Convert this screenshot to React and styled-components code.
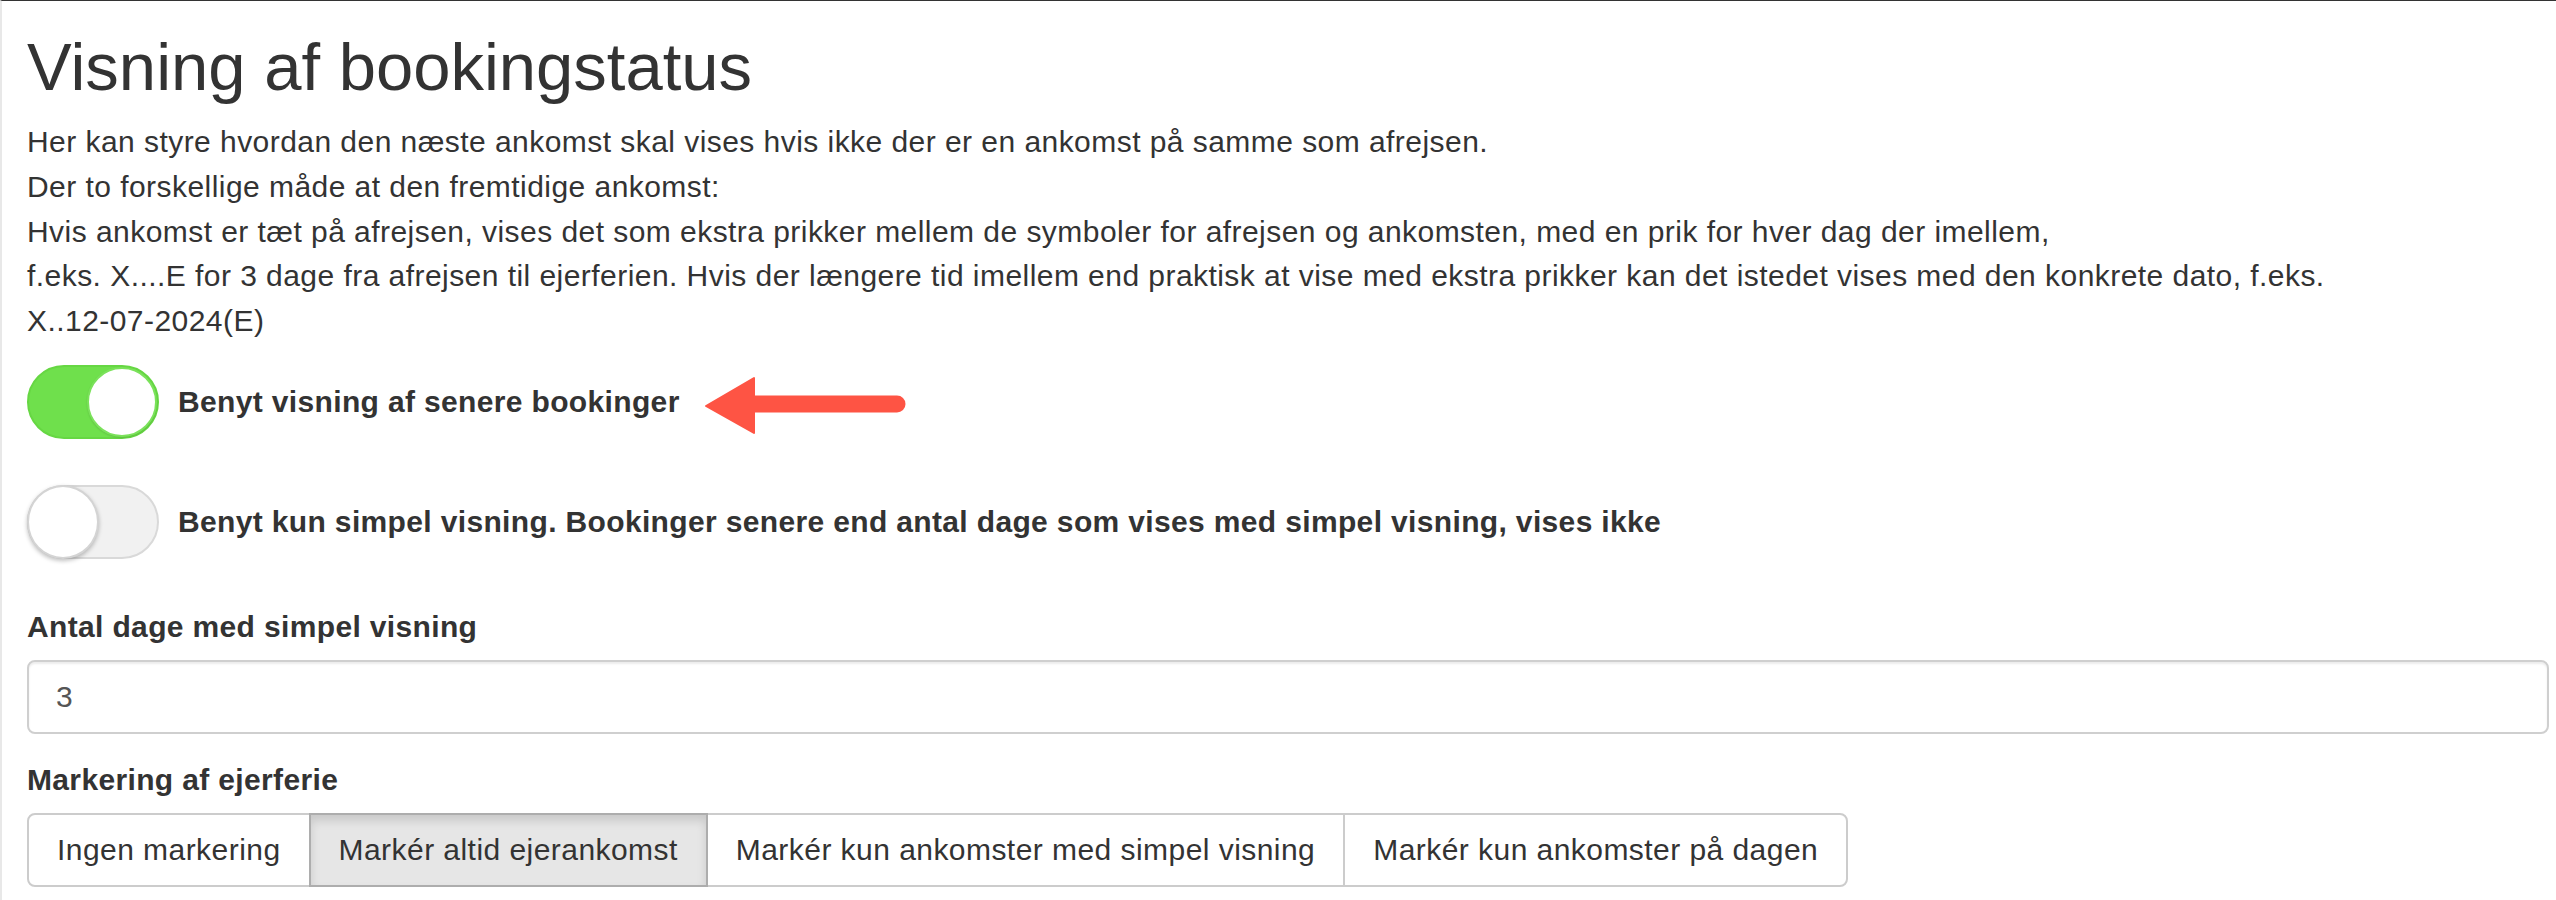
import React, { useState } from "react";
import styled, { createGlobalStyle, css } from "styled-components";

const GlobalStyle = createGlobalStyle`
  html, body {
    margin: 0;
    padding: 0;
    background: #fff;
  }
  body {
    font-family: "Liberation Sans", Arial, Helvetica, sans-serif;
    color: #333;
  }
  * { box-sizing: border-box; }
`;

const Page = styled.div`
  min-height: 900px;
  border-top: 1px solid #333;
  border-left: 2px solid #e8e8e8;
  padding: 28px 7px 0 25px;
`;

const Title = styled.h1`
  margin: 0 0 16px;
  font-size: 67px;
  font-weight: 400;
  line-height: 75px;
  color: #333;
`;

const Intro = styled.p`
  margin: 0 0 21px;
  font-size: 30px;
  letter-spacing: 0.45px;
  line-height: 44.8px;
`;

const SwitchRow = styled.div`
  position: relative;
  display: flex;
  align-items: center;
  gap: 19px;
  height: 74px;
  margin-bottom: 46px;
`;

const Track = styled.button`
  position: relative;
  flex: none;
  width: 132px;
  height: 74px;
  padding: 0;
  border-radius: 37px;
  cursor: pointer;
  ${(p) =>
    p.$on
      ? css`
          background: #6fe04c;
          border: 2px solid #66d743;
        `
      : css`
          background: #f1f1f1;
          border: 2px solid #d9d9d9;
        `}
`;

const Knob = styled.span`
  position: absolute;
  top: ${(p) => (p.$on ? "0px" : "-2px")};
  left: ${(p) => (p.$on ? "58px" : "-2px")};
  width: ${(p) => (p.$on ? "70px" : "72px")};
  height: ${(p) => (p.$on ? "70px" : "74px")};
  border-radius: 50%;
  background: #fff;
  ${(p) =>
    p.$on
      ? css`
          border: 2px solid #7be25b;
          box-shadow: 0 1px 2px rgba(0, 0, 0, 0.12);
        `
      : css`
          border: 2px solid #d4d4d4;
          box-shadow: 0 2px 4px rgba(0, 0, 0, 0.25);
        `}
`;

const SwitchLabel = styled.span`
  font-size: 30px;
  font-weight: 700;
  letter-spacing: 0.35px;
  line-height: 44.8px;
  color: #333;
`;

const Arrow = styled.svg`
  position: absolute;
  left: 673px;
  top: 10px;
  width: 210px;
  height: 60px;
  overflow: visible;
`;

const FieldLabel = styled.label`
  display: block;
  margin-bottom: 10px;
  font-size: 30px;
  font-weight: 700;
  letter-spacing: 0.35px;
  line-height: 44.8px;
`;

const TextInput = styled.input`
  display: block;
  width: 100%;
  height: 74px;
  margin: 0 0 24px;
  padding: 0 27px;
  border: 2px solid #cfcfcf;
  border-radius: 8px;
  box-shadow: inset 0 2px 2px rgba(0, 0, 0, 0.075);
  font-family: "Liberation Sans", Arial, sans-serif;
  font-size: 30px;
  color: #555;
  background: #fff;
  outline: none;
`;

const BtnGroup = styled.div`
  display: inline-flex;
`;

const GroupButton = styled.button`
  height: 74px;
  padding: 0 28px;
  margin-left: -2px;
  font-family: "Liberation Sans", Arial, sans-serif;
  font-size: 30px;
  letter-spacing: 0.45px;
  color: #333;
  border: 2px solid #cccccc;
  background: #fff;
  cursor: pointer;
  white-space: nowrap;
  &:first-child {
    margin-left: 0;
    border-radius: 8px 0 0 8px;
  }
  &:last-child {
    border-radius: 0 8px 8px 0;
  }
  ${(p) =>
    p.$active &&
    css`
      position: relative;
      z-index: 1;
      background: #e6e6e6;
      border-color: #adadad;
      box-shadow: inset 0 6px 10px rgba(0, 0, 0, 0.125);
    `}
`;

const options = [
  "Ingen markering",
  "Markér altid ejerankomst",
  "Markér kun ankomster med simpel visning",
  "Markér kun ankomster på dagen",
];

export default function App() {
  const [later, setLater] = useState(true);
  const [simple, setSimple] = useState(false);
  const [mark, setMark] = useState(1);
  const [days, setDays] = useState("3");

  return (
    <>
      <GlobalStyle />
      <Page>
        <Title>Visning af bookingstatus</Title>
        <Intro>
          Her kan styre hvordan den næste ankomst skal vises hvis ikke der er en ankomst på samme som afrejsen.
          <br />
          Der to forskellige måde at den fremtidige ankomst:
          <br />
          Hvis ankomst er tæt på afrejsen, vises det som ekstra prikker mellem de symboler for afrejsen og ankomsten, med en prik for hver dag der imellem,
          <br />
          f.eks. X....E for 3 dage fra afrejsen til ejerferien. Hvis der længere tid imellem end praktisk at vise med ekstra prikker kan det istedet vises med den konkrete dato, f.eks.
          <br />
          X..12-07-2024(E)
        </Intro>

        <SwitchRow>
          <Track $on={later} onClick={() => setLater(!later)} aria-pressed={later}>
            <Knob $on={later} />
          </Track>
          <SwitchLabel>Benyt visning af senere bookinger</SwitchLabel>
          <Arrow viewBox="0 0 210 60">
            <line x1="50" y1="29" x2="197" y2="29" stroke="#fe5444" strokeWidth="17" strokeLinecap="round" />
            <path d="M6 31 L54 3 L54 58 Z" fill="#fe5444" stroke="#fe5444" strokeWidth="2" strokeLinejoin="round" />
          </Arrow>
        </SwitchRow>

        <SwitchRow>
          <Track $on={simple} onClick={() => setSimple(!simple)} aria-pressed={simple}>
            <Knob $on={simple} />
          </Track>
          <SwitchLabel>
            Benyt kun simpel visning. Bookinger senere end antal dage som vises med simpel visning, vises ikke
          </SwitchLabel>
        </SwitchRow>

        <FieldLabel htmlFor="days">Antal dage med simpel visning</FieldLabel>
        <TextInput id="days" value={days} onChange={(e) => setDays(e.target.value)} />

        <FieldLabel>Markering af ejerferie</FieldLabel>
        <BtnGroup>
          {options.map((o, i) => (
            <GroupButton key={o} $active={mark === i} onClick={() => setMark(i)}>
              {o}
            </GroupButton>
          ))}
        </BtnGroup>
      </Page>
    </>
  );
}
